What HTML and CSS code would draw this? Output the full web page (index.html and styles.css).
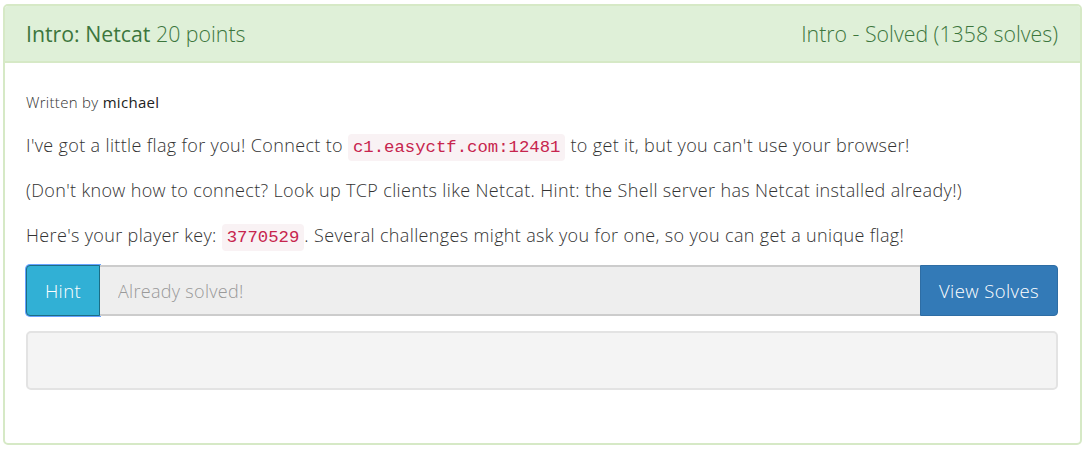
FILE: index.html
```html
<!DOCTYPE html>
<html>
<head>
<meta charset="utf-8">
<link rel="stylesheet" href="styles.css">
</head>
<body>
<div class="wrap">
  <div class="panel">
    <div class="panel-heading">
      <div class="title"><span class="name">Intro: Netcat</span> 20 points</div>
      <div class="status">Intro - Solved (1358 solves)</div>
    </div>
    <div class="panel-body">
      <p class="author">Written by <span class="who">michael</span></p>
      <p>I've got a little flag for you! Connect to <code>c1.easyctf.com:12481</code> to get it, but you can't use your browser!</p>
      <p>(Don't know how to connect? Look up TCP clients like Netcat. Hint: the Shell server has Netcat installed already!)</p>
      <p>Here's your player key: <code>3770529</code>. Several challenges might ask you for one, so you can get a unique flag!</p>
      <div class="input-group">
        <button class="btn btn-hint">Hint</button>
        <input class="flag-input" type="text" placeholder="Already solved!" disabled>
        <button class="btn btn-solves">View Solves</button>
      </div>
      <div class="well"></div>
    </div>
  </div>
</div>
</body>
</html>
```
FILE: styles.css
```css
html, body {
  margin: 0;
  padding: 0;
  background: #fff;
}
body {
  font-family: "Open Sans", "Liberation Sans", sans-serif;
  font-weight: 300;
  color: #333;
}
.wrap {
  padding: 4px 3px 0 3px;
  width: 1079px;
}
.panel {
  border: 2px solid #d6e9c6;
  border-radius: 5px;
  height: 441px;
  box-sizing: border-box;
}
.panel-heading {
  background: #dff0d8;
  color: #3c763d;
  border-bottom: 2px solid #d6e9c6;
  height: 55px;
  display: flex;
  justify-content: space-between;
  align-items: center;
  padding: 0 22px 0 21px;
  font-size: 21.3px;
  border-radius: 3px 3px 0 0;
}
.title .name {
  font-weight: 400;
}
.panel-body {
  padding: 28px 22px 0 21px;
}
p {
  margin: 0 0 18px 0;
  font-size: 18px;
  line-height: 27px;
  letter-spacing: 0.35px;
}
.author {
  font-size: 15px;
  line-height: 22px;
  margin-bottom: 19px;
  letter-spacing: 0.3px;
}
.who {
  font-weight: 400;
  color: #222;
}
code {
  font-family: "Liberation Mono", monospace;
  font-size: 17.3px;
  line-height: 1;
  letter-spacing: 0;
  color: #c7254e;
  background: #f9f2f4;
  padding: 4px 5px;
  border-radius: 4px;
}
.input-group {
  display: flex;
  height: 51px;
  margin-top: -2px;
}
.btn {
  font-family: "Open Sans", "Liberation Sans", sans-serif;
  font-weight: 300;
  font-size: 18.5px;
  letter-spacing: 0.4px;
  color: #fff;
  border: 1px solid;
  margin: 0;
}
.btn-hint {
  width: 74px;
  background: #31b0d5;
  border-color: #1b6d85;
  border-radius: 4px 0 0 4px;
  box-shadow: 0 0 0 1px #66a3ff;
}
.flag-input {
  flex: 1;
  background: #eee;
  border: 2px solid #ccc;
  border-left: 0;
  border-right: 0;
  padding: 0 18px;
  font-family: "Open Sans", "Liberation Sans", sans-serif;
  font-weight: 300;
  font-size: 18px;
  letter-spacing: 0.3px;
  margin: 0;
}
.flag-input::placeholder {
  color: #999;
}
.btn-solves {
  width: 138px;
  background: #337ab7;
  border-color: #2e6da4;
  border-radius: 0 4px 4px 0;
}
.well {
  margin-top: 15px;
  height: 59px;
  box-sizing: border-box;
  background: #f4f4f4;
  border: 2px solid #e3e3e3;
  border-radius: 5px;
}
```
